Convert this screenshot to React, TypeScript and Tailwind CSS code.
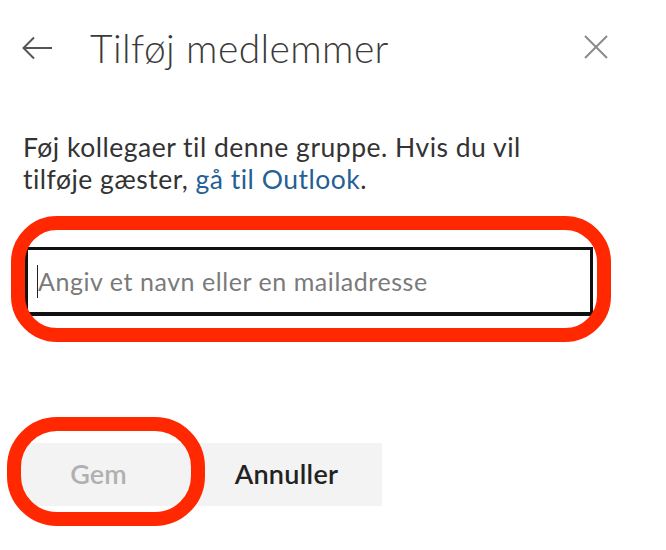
import { useState } from "react";

const fontStack = { fontFamily: 'Lato, "Open Sans", "Liberation Sans", sans-serif' };

function BackArrow() {
  return (
    <svg width="31" height="24" viewBox="0 0 31 24" fill="none" stroke="#555" strokeWidth="2">
      <path d="M30 12H2" />
      <path d="M12 1.5L1.5 12L12 22.5" />
    </svg>
  );
}

function CloseIcon() {
  return (
    <svg width="24" height="24" viewBox="0 0 24 24" fill="none" stroke="#8a8a8a" strokeWidth="2">
      <path d="M1 1L23 23" />
      <path d="M23 1L1 23" />
    </svg>
  );
}

export default function App() {
  const [value, setValue] = useState("");

  return (
    <div
      className="relative h-[550px] w-[666px] overflow-hidden bg-white text-[#333]"
      style={fontStack}
    >
      <header className="flex h-[96px] items-start pt-[23px]">
        <button type="button" className="ml-[22px] mt-[13px] flex h-[24px] w-[31px] items-center">
          <BackArrow />
        </button>
        <h1 className="ml-[37px] text-[39px] font-light leading-[50px] tracking-[0.4px] text-[#3a3a3a]">
          Tilføj medlemmer
        </h1>
        <button type="button" className="ml-auto mr-[58px] mt-[12px]">
          <CloseIcon />
        </button>
      </header>

      <p className="mt-[35px] pl-[23px] text-[26.5px] leading-[32px] tracking-[0.5px] text-[#333]">
        Føj kollegaer til denne gruppe. Hvis du vil
        <br />
        tilføje gæster, <a className="text-[#245f95]">gå til Outlook</a>.
      </p>

      <div className="ml-[25px] mt-[52px] flex h-[69px] w-[568px] items-center border-[3px] border-b-[4px] border-[#111] bg-white px-[9px]">
        <span className="h-[33px] w-px bg-[#222]" />
        <input
          value={value}
          onChange={(e) => setValue(e.target.value)}
          placeholder="Angiv et navn eller en mailadresse"
          className="h-full flex-1 bg-transparent text-[25px] tracking-[0.55px] text-[#333] outline-none placeholder:text-[#7a7a7a]"
          style={fontStack}
        />
      </div>

      <div className="ml-[20px] mt-[127px] flex">
        <button
          type="button"
          disabled
          className="h-[63px] w-[157px] bg-[#f3f3f3] text-[27px] font-semibold text-[#b0b0b0]"
        >
          Gem
        </button>
        <button
          type="button"
          className="h-[63px] w-[205px] bg-[#f3f3f3] pl-[14px] text-[27px] font-semibold tracking-[0.3px] text-[#222]"
        >
          Annuller
        </button>
      </div>

      <div className="pointer-events-none absolute left-[11px] top-[216px] h-[126px] w-[600px] rounded-[46px] border-[14px] border-[#ff2800]" />
      <div className="pointer-events-none absolute left-[7px] top-[417px] h-[109px] w-[198px] rounded-[50px] border-[14px] border-[#ff2800]" />
    </div>
  );
}
